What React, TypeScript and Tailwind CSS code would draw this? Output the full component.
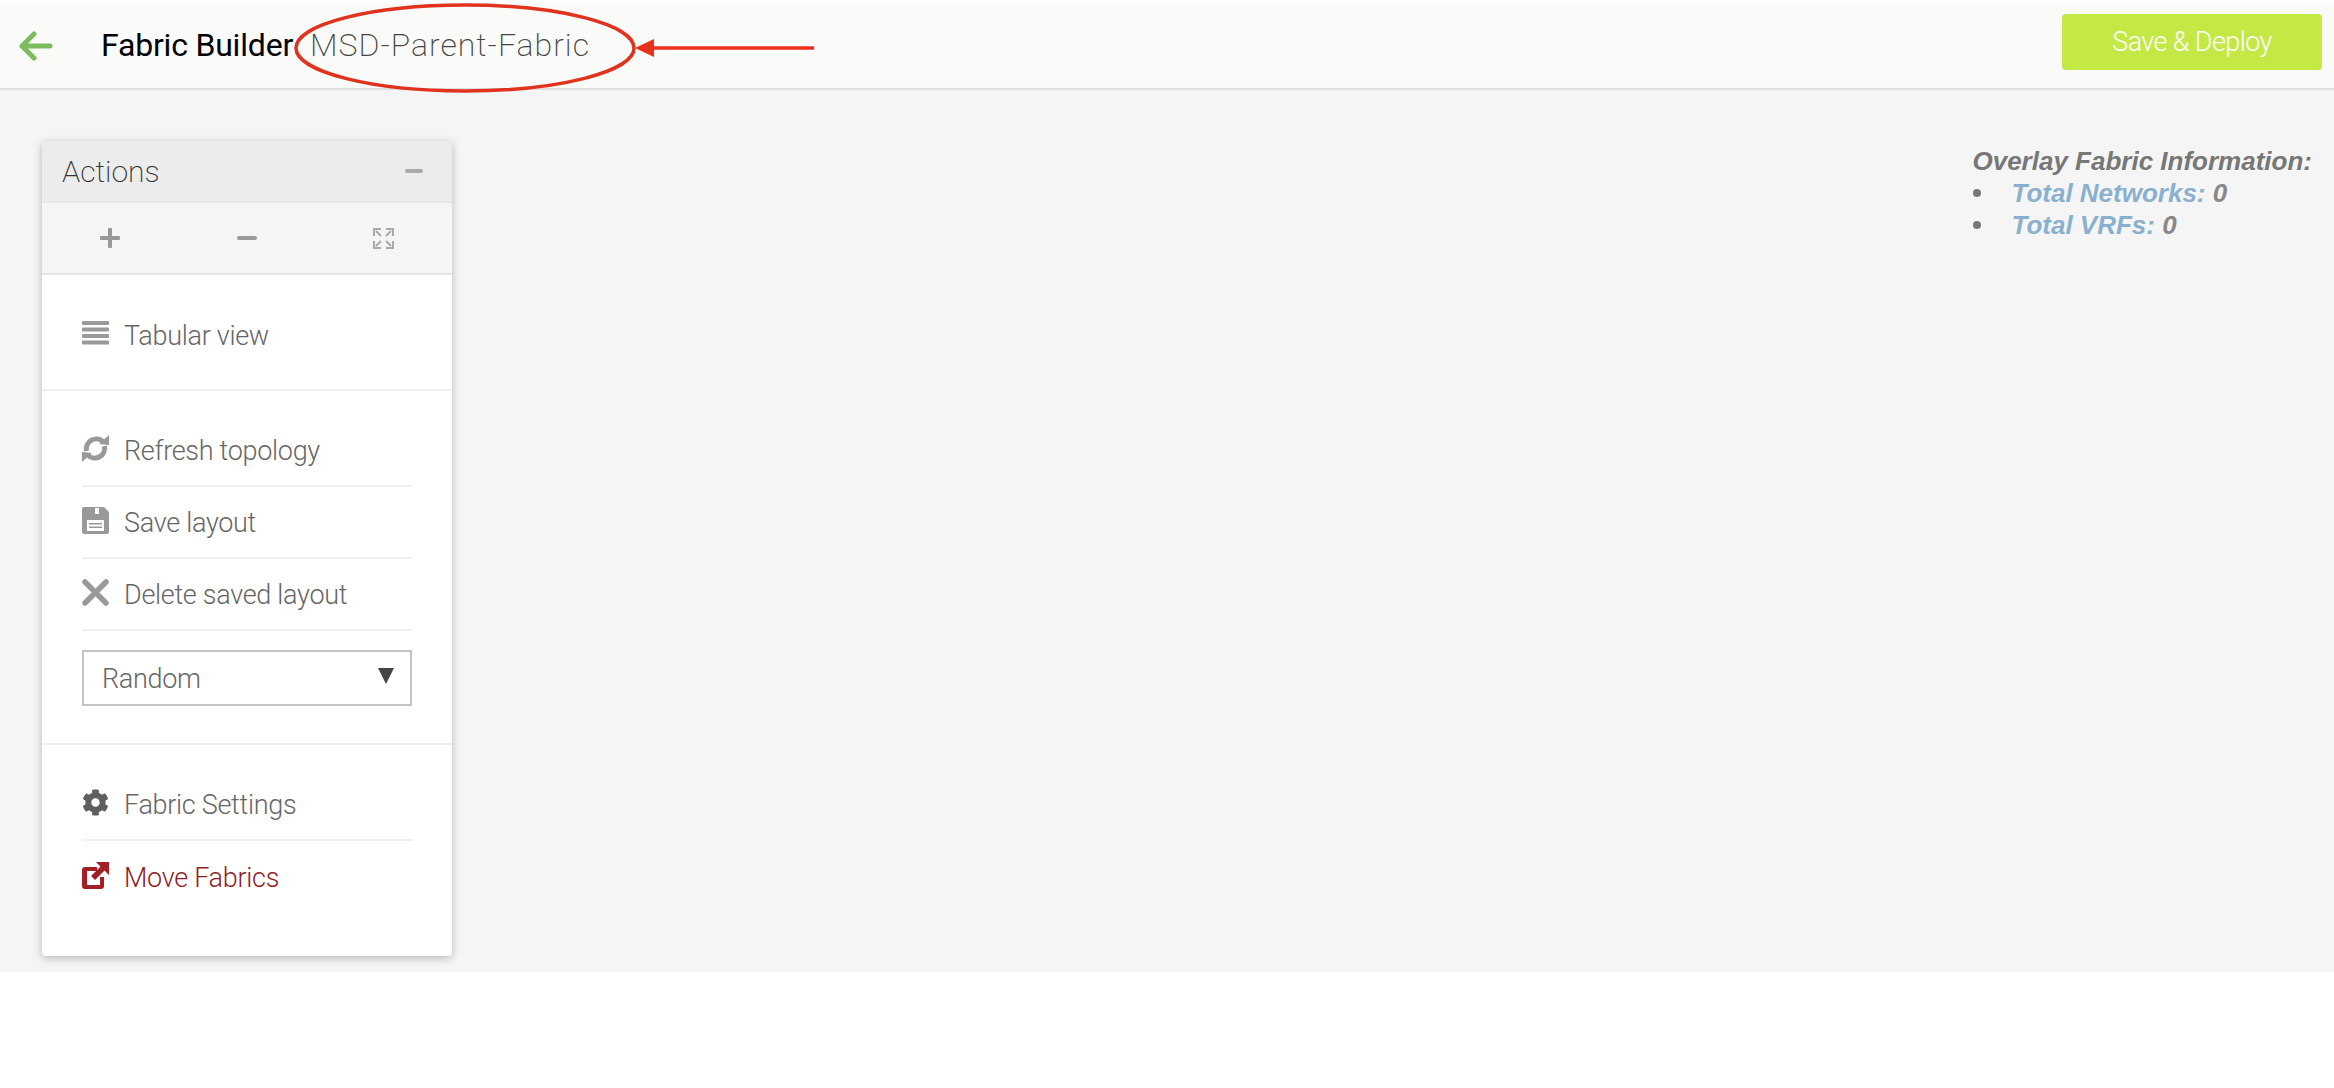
import React from 'react';
import { FaCog } from 'react-icons/fa';

const sans = "font-['Roboto','Liberation_Sans',sans-serif]";

const ListIcon = () => (
  <svg viewBox="0 0 27 24" className="h-6 w-[27px]" fill="#999">
    <rect x="0" y="0" width="27" height="4" rx="1" />
    <rect x="0" y="6.5" width="27" height="4" rx="1" />
    <rect x="0" y="13" width="27" height="4" rx="1" />
    <rect x="0" y="19.5" width="27" height="4" rx="1" />
  </svg>
);

const RefreshIcon = () => (
  <svg viewBox="0 0 27 27" className="h-[27px] w-[27px]" fill="none" stroke="#999" strokeWidth="5">
    <path d="M4.5 16 A10 10 0 0 1 21 6.5" />
    <path d="M22.5 11 A10 10 0 0 1 6 20.5" />
    <path d="M17 9 L27 10 L27 0 Z" fill="#999" stroke="none" />
    <path d="M10 18 L0 17 L0 27 Z" fill="#999" stroke="none" />
  </svg>
);

const SaveIcon = () => (
  <svg viewBox="0 0 27 27" className="h-[27px] w-[27px]">
    <path d="M2 0 H22 L27 5 V25 a2 2 0 0 1 -2 2 H2 a2 2 0 0 1 -2 -2 V2 a2 2 0 0 1 2 -2 Z" fill="#999" />
    <rect x="13" y="1" width="4" height="6" fill="#fff" />
    <rect x="5" y="13" width="17" height="11" fill="#fff" />
    <rect x="7" y="16" width="13" height="1.5" fill="#999" />
    <rect x="7" y="19.5" width="13" height="1.5" fill="#999" />
  </svg>
);

const CloseIcon = () => (
  <svg viewBox="0 0 27 27" className="h-[27px] w-[27px]" stroke="#999" strokeWidth="5.5" strokeLinecap="round">
    <path d="M3 3 L24 24 M24 3 L3 24" />
  </svg>
);

const MoveIcon = () => (
  <svg viewBox="0 0 27 27" className="h-[27px] w-[27px]" fill="#a31f26">
    <path d="M3 5 H15 V9 H5 V23 H18 V15 H22 V24 a3 3 0 0 1 -3 3 H3 a3 3 0 0 1 -3 -3 V8 a3 3 0 0 1 3 -3 Z" />
    <path d="M14 0 H27 V13 L22.5 8.5 L13 18 L9 14 L18.5 4.5 Z" />
  </svg>
);

const ExpandIcon = () => (
  <svg viewBox="0 0 21 21" className="h-[21px] w-[21px]" fill="none" stroke="#aaa" strokeWidth="2">
    <path d="M8 1 H1 V8 M13 1 H20 V8 M1 13 V20 H8 M20 13 V20 H13" />
    <path d="M3 3 L8 8 M18 3 L13 8 M3 18 L8 13 M18 18 L13 13" />
  </svg>
);

interface RowProps {
  icon: React.ReactNode;
  label: string;
  last?: boolean;
  danger?: boolean;
}

const Row: React.FC<RowProps> = ({ icon, label, last, danger }) => (
  <div className={`flex h-[72px] items-center gap-[15px] ${last ? '' : 'border-b-2 border-[#f0f0f0]'}`}>
    <span className="flex w-[27px] -translate-y-[2px] justify-center">{icon}</span>
    <span className={`pt-[2px] text-[27px] font-light tracking-[-0.3px] ${danger ? 'text-[#8f1d25]' : 'text-[#666]'}`}>{label}</span>
  </div>
);

const App: React.FC = () => {
  return (
    <div className={`relative h-[1088px] w-full bg-white pt-[3px] ${sans}`}>
      {/* barra superior */}
      <div className="flex h-[87px] items-center justify-between border-b-2 border-[#dfdfdd] bg-[#fafaf8] pr-3">
        <div className="flex items-center">
          <svg viewBox="0 0 34 30" className="ml-[19px] h-[30px] w-[34px]" fill="none" stroke="#7dbb5f" strokeWidth="5" strokeLinecap="round" strokeLinejoin="round">
            <path d="M15 3 L3 15 L15 27 M3 15 H31" />
          </svg>
          <span className="ml-[48px] pb-[2px] text-[32px] tracking-[-0.2px] text-black">Fabric Builder</span>
          <span className="ml-[17px] pb-[2px] text-[32px] font-extralight tracking-[1px] text-[#444]">MSD-Parent-Fabric</span>
        </div>
        <button className="mt-[-7px] flex h-14 w-[260px] items-center justify-center rounded bg-[#c4e945] text-[27px] font-light tracking-[-0.6px] text-white">
          Save &amp; Deploy
        </button>
      </div>

      {/* contenido */}
      <div className="flex h-[882px] items-start justify-between bg-[#f5f5f5] pl-[42px] pr-[22px] pt-[51px]">
        <div className="w-[410px] overflow-hidden rounded bg-white shadow-[0_2px_8px_rgba(0,0,0,0.25)]">
          <div className="flex h-[62px] items-center justify-between border-b-2 border-[#e6e6e6] bg-[#ececec] pl-5 pr-[29px]">
            <span className="text-[30px] font-extralight text-[#333]">Actions</span>
            <span className="h-1 w-[18px] rounded-sm bg-[#aaa]" />
          </div>
          <div className="grid h-[72px] grid-cols-3 items-center border-b-2 border-[#e6e6e6] bg-[#f5f5f5]">
            <svg viewBox="0 0 20 20" className="mx-auto h-5 w-5" fill="#999">
              <rect x="0" y="8" width="20" height="4" rx="1" />
              <rect x="8" y="0" width="4" height="20" rx="1" />
            </svg>
            <span className="mx-auto h-1 w-5 rounded-sm bg-[#999]" />
            <span className="mx-auto flex"><ExpandIcon /></span>
          </div>
          <div className="border-b-2 border-[#efefef] px-10 pb-[18px] pt-6">
            <Row icon={<ListIcon />} label="Tabular view" last />
          </div>
          <div className="border-b-2 border-[#efefef] px-10 pb-[37px] pt-6">
            <Row icon={<RefreshIcon />} label="Refresh topology" />
            <Row icon={<SaveIcon />} label="Save layout" />
            <Row icon={<CloseIcon />} label="Delete saved layout" />
            <div className="mt-[19px] flex h-14 items-center justify-between border-2 border-[#c4c4c4] pl-[18px] pr-4 text-[27px] font-light tracking-[-0.3px] text-[#666]">
              <span className="pt-[2px]">Random</span>
              <svg viewBox="0 0 16 16" className="mb-[5px] h-4 w-4" fill="#444">
                <path d="M0 0 H16 L8 16 Z" />
              </svg>
            </div>
          </div>
          <div className="px-10 pb-[43px] pt-6">
            <Row icon={<FaCog size={27} color="#5f5f5f" />} label="Fabric Settings" />
            <Row icon={<MoveIcon />} label="Move Fabrics" last danger />
          </div>
        </div>

        <div className="mt-[4px] font-['Liberation_Sans',sans-serif] text-[26px] font-bold italic leading-8 text-[#777]">
          <div>Overlay Fabric Information:</div>
          <ul>
            <li className="flex items-center">
              <span className="ml-[1px] mr-[30px] h-2 w-2 rounded-full bg-[#777]" />
              <span><span className="text-[#8ab0cf]">Total Networks:</span> <span className="text-[#888]">0</span></span>
            </li>
            <li className="flex items-center">
              <span className="ml-[1px] mr-[30px] h-2 w-2 rounded-full bg-[#777]" />
              <span><span className="text-[#8ab0cf]">Total VRFs:</span> <span className="text-[#888]">0</span></span>
            </li>
          </ul>
        </div>
      </div>

      {/* anotación */}
      <svg className="pointer-events-none absolute left-0 top-0" width="840" height="100" fill="none">
        <ellipse cx="465" cy="48" rx="169" ry="43" stroke="#e0321c" strokeWidth="3.5" />
        <path d="M650 48 H814" stroke="#e8301a" strokeWidth="3.5" />
        <path d="M635 48 L654 39 V57 Z" fill="#e8301a" />
      </svg>
    </div>
  );
};

export default App;
